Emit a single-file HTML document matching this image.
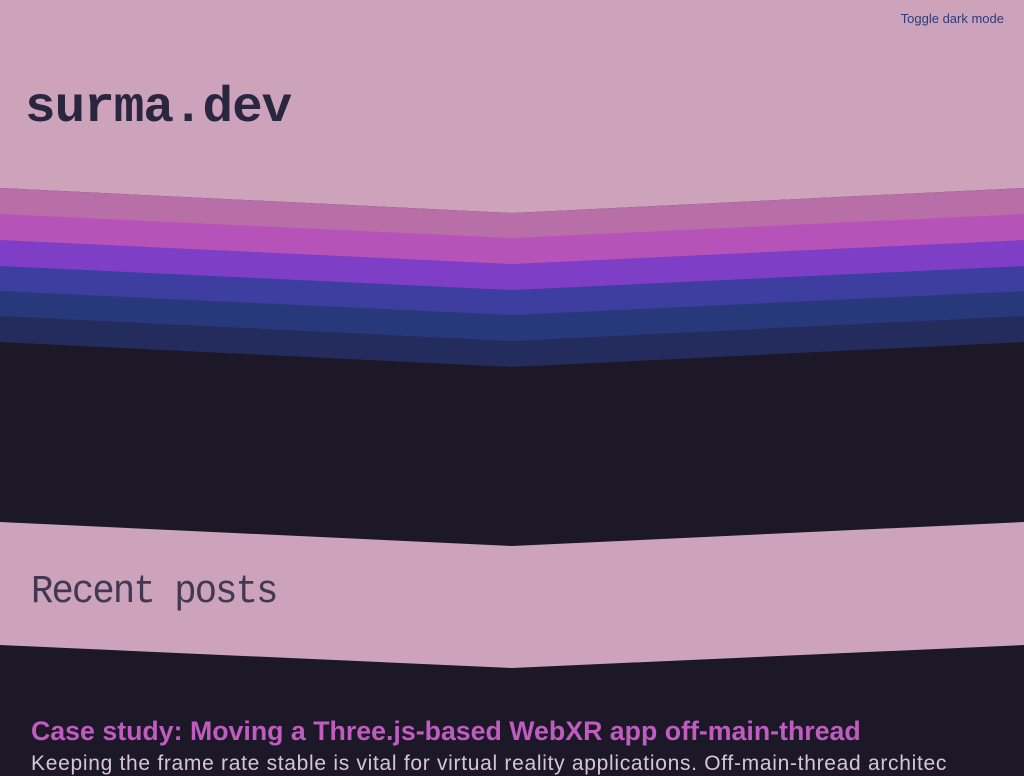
<!DOCTYPE html>
<html><head><meta charset="utf-8"><style>
html,body{margin:0;padding:0;width:1024px;height:768px;overflow:hidden;background:#1c1828;font-family:"Liberation Sans",sans-serif}
svg{position:absolute;left:0;top:0}
.t{position:absolute}
</style></head><body>
<svg width="1024" height="768" viewBox="0 0 1024 768">
<rect x="0" y="0" width="1024" height="768" fill="#1c1828"/>
<polygon points="0,0 1024,0 1024,188 512,213 0,188" fill="#cca3bb"/>
<polygon points="0,188 512,213 1024,188 1024,768 0,768" fill="#b86fa8"/>
<polygon points="0,214 512,238 1024,214 1024,768 0,768" fill="#b653b8"/>
<polygon points="0,240 512,264 1024,240 1024,768 0,768" fill="#7e3fc6"/>
<polygon points="0,266 512,290 1024,266 1024,768 0,768" fill="#3e3ea0"/>
<polygon points="0,291 512,315 1024,291 1024,768 0,768" fill="#27397a"/>
<polygon points="0,316 512,341 1024,316 1024,768 0,768" fill="#232c5c"/>
<polygon points="0,342 512,367 1024,342 1024,768 0,768" fill="#1c1828"/>
<polygon points="0,522 512,546 1024,522 1024,645 512,668 0,645" fill="#cca3bb"/>
</svg>
<div class="t" style="right:20px;top:11px;font-size:13px;color:#2e3a7a">Toggle dark mode</div>
<div class="t" style="left:25px;top:80px;font-family:'Liberation Mono',monospace;font-weight:bold;font-size:50px;color:#2a2640;letter-spacing:-1px;transform:scaleX(1.02);transform-origin:left">surma.dev</div>
<div class="t" style="left:31px;top:570px;font-family:'Liberation Mono',monospace;font-size:40px;color:#2a2640;letter-spacing:-2px;opacity:.85;transform:scaleX(0.93);transform-origin:left">Recent posts</div>
<div class="t" style="left:31px;top:716px;font-family:'Liberation Sans',sans-serif;font-weight:bold;font-size:27px;color:#c05bc0;transform:scaleX(0.99);transform-origin:left;white-space:nowrap">Case study: Moving a Three.js-based WebXR app off-main-thread</div>
<div class="t" style="left:31px;top:752px;font-size:21px;letter-spacing:0.7px;color:#d8c6d8;white-space:nowrap">Keeping the frame rate stable is vital for virtual reality applications. Off-main-thread architec</div>
</body></html>
